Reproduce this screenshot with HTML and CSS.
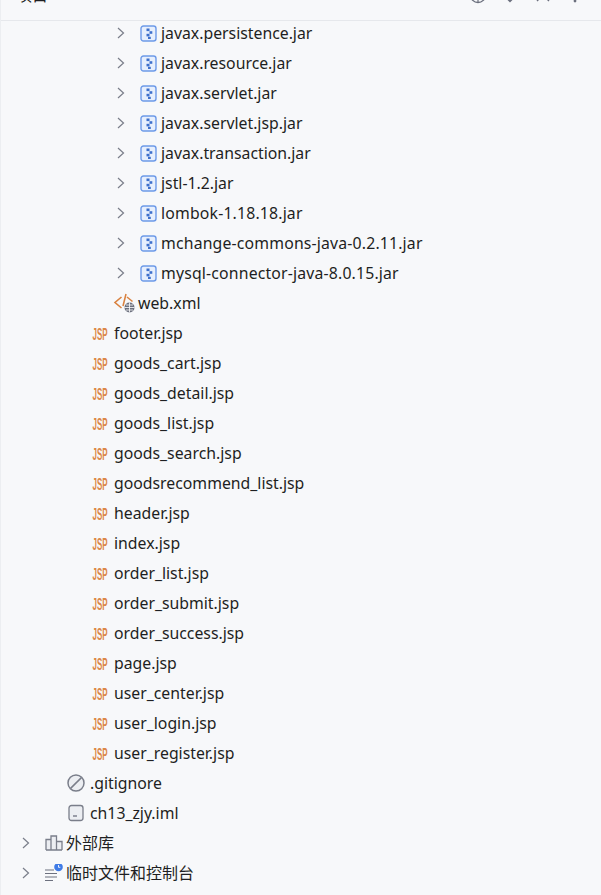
FILE: index.html
```html
<!DOCTYPE html>
<html lang="zh-CN">
<head>
<meta charset="utf-8">
<title>项目</title>
<link rel="stylesheet" href="styles.css">
</head>
<body>
<svg class="defs" width="0" height="0" aria-hidden="true">
  <defs>
    <symbol id="chev" viewBox="0 0 10 14"><path d="M2 2 7.500 7 2 12" fill="none" stroke="#7a7e8a" stroke-width="1.200"/></symbol>
    <symbol id="jar" viewBox="0 0 17 17"><rect x="1" y="1" width="15" height="15" rx="2.500" fill="#e7effd" stroke="#6d9ae8" stroke-width="1.400"/><rect x="6.500" y="3.500" width="3" height="2.600" fill="#3f70cc"/><rect x="9.500" y="6.200" width="2.800" height="2.600" fill="#3f70cc"/><rect x="6.500" y="8.800" width="3" height="2.600" fill="#3f70cc"/><rect x="8" y="11.800" width="2.800" height="2.200" fill="#3f70cc"/></symbol>
    <symbol id="jsp" viewBox="0 0 16 14"><text x="0.500" y="13.500" class="jsp-mark" textLength="15" lengthAdjust="spacingAndGlyphs">JSP</text></symbol>
  </defs>
</svg>
<div class="panel">
  <header class="head">
    <span class="title">项目</span>
    <div class="tools">
      <svg class="tool" viewBox="0 0 18 18"><circle cx="9" cy="9" r="7.500" fill="none" stroke="#6c707e" stroke-width="1.300"/><path d="M9 1.500v15M1.500 9h15" fill="none" stroke="#6c707e" stroke-width="1.200"/></svg>
      <svg class="tool" viewBox="0 0 18 18"><path d="M4 6.500 9 11.500 14 6.500" fill="none" stroke="#6c707e" stroke-width="1.400"/><path d="M5 11.500 9 15.500 13 11.500" fill="none" stroke="#6c707e" stroke-width="1.400"/></svg>
      <svg class="tool" viewBox="0 0 18 18"><path d="M3 3 15 15M15 3 3 15" fill="none" stroke="#6c707e" stroke-width="1.400"/></svg>
      <svg class="tool" viewBox="0 0 18 18"><circle cx="9" cy="3" r="1.400" fill="#6c707e"/><circle cx="9" cy="9" r="1.400" fill="#6c707e"/><circle cx="9" cy="15" r="1.400" fill="#6c707e"/></svg>
    </div>
  </header>
  <ul class="tree">
    <li class="row lv-jar"><svg class="chev"><use href="#chev"/></svg><svg class="ic-jar"><use href="#jar"/></svg><span>javax.persistence.jar</span></li>
    <li class="row lv-jar"><svg class="chev"><use href="#chev"/></svg><svg class="ic-jar"><use href="#jar"/></svg><span>javax.resource.jar</span></li>
    <li class="row lv-jar"><svg class="chev"><use href="#chev"/></svg><svg class="ic-jar"><use href="#jar"/></svg><span>javax.servlet.jar</span></li>
    <li class="row lv-jar"><svg class="chev"><use href="#chev"/></svg><svg class="ic-jar"><use href="#jar"/></svg><span>javax.servlet.jsp.jar</span></li>
    <li class="row lv-jar"><svg class="chev"><use href="#chev"/></svg><svg class="ic-jar"><use href="#jar"/></svg><span>javax.transaction.jar</span></li>
    <li class="row lv-jar"><svg class="chev"><use href="#chev"/></svg><svg class="ic-jar"><use href="#jar"/></svg><span>jstl-1.2.jar</span></li>
    <li class="row lv-jar"><svg class="chev"><use href="#chev"/></svg><svg class="ic-jar"><use href="#jar"/></svg><span class="ver">lombok-1.18.18.jar</span></li>
    <li class="row lv-jar"><svg class="chev"><use href="#chev"/></svg><svg class="ic-jar"><use href="#jar"/></svg><span class="ver">mchange-commons-java-0.2.11.jar</span></li>
    <li class="row lv-jar"><svg class="chev"><use href="#chev"/></svg><svg class="ic-jar"><use href="#jar"/></svg><span class="ver">mysql-connector-java-8.0.15.jar</span></li>
    <li class="row lv-xml"><svg class="ic-xml" viewBox="0 0 22 20"><path d="M8.500 4 2 9.500 8.500 15" fill="none" stroke="#d9813f" stroke-width="1.600"/><path d="M13 1 10 13" fill="none" stroke="#d9813f" stroke-width="1.500"/><path d="M14 4 19.500 8.500" fill="none" stroke="#d9813f" stroke-width="1.500"/><circle cx="16.500" cy="14.500" r="5" fill="#6c707e"/><path d="M11.500 14.500h10M16.500 9.500v10M13 12h7M13 17h7" stroke="#fff" stroke-width=".8" fill="none"/></svg><span>web.xml</span></li>
    <li class="row lv-jsp"><svg class="ic-jsp"><use href="#jsp"/></svg><span>footer.jsp</span></li>
    <li class="row lv-jsp"><svg class="ic-jsp"><use href="#jsp"/></svg><span>goods_cart.jsp</span></li>
    <li class="row lv-jsp"><svg class="ic-jsp"><use href="#jsp"/></svg><span>goods_detail.jsp</span></li>
    <li class="row lv-jsp"><svg class="ic-jsp"><use href="#jsp"/></svg><span>goods_list.jsp</span></li>
    <li class="row lv-jsp"><svg class="ic-jsp"><use href="#jsp"/></svg><span>goods_search.jsp</span></li>
    <li class="row lv-jsp"><svg class="ic-jsp"><use href="#jsp"/></svg><span>goodsrecommend_list.jsp</span></li>
    <li class="row lv-jsp"><svg class="ic-jsp"><use href="#jsp"/></svg><span>header.jsp</span></li>
    <li class="row lv-jsp"><svg class="ic-jsp"><use href="#jsp"/></svg><span>index.jsp</span></li>
    <li class="row lv-jsp"><svg class="ic-jsp"><use href="#jsp"/></svg><span>order_list.jsp</span></li>
    <li class="row lv-jsp"><svg class="ic-jsp"><use href="#jsp"/></svg><span>order_submit.jsp</span></li>
    <li class="row lv-jsp"><svg class="ic-jsp"><use href="#jsp"/></svg><span>order_success.jsp</span></li>
    <li class="row lv-jsp"><svg class="ic-jsp"><use href="#jsp"/></svg><span>page.jsp</span></li>
    <li class="row lv-jsp"><svg class="ic-jsp"><use href="#jsp"/></svg><span>user_center.jsp</span></li>
    <li class="row lv-jsp"><svg class="ic-jsp"><use href="#jsp"/></svg><span>user_login.jsp</span></li>
    <li class="row lv-jsp"><svg class="ic-jsp"><use href="#jsp"/></svg><span>user_register.jsp</span></li>
    <li class="row lv-file"><svg class="ic-file" viewBox="0 0 18 18"><circle cx="9" cy="9" r="8" fill="#eceef2" stroke="#7a7e8a" stroke-width="1.500"/><path d="M3.600 14.400 14.400 3.600" stroke="#7a7e8a" stroke-width="1.500"/></svg><span>.gitignore</span></li>
    <li class="row lv-file"><svg class="ic-file" viewBox="0 0 18 18"><rect x="2" y="1.500" width="14" height="15" rx="2.500" fill="#eceef2" stroke="#7a7e8a" stroke-width="1.300"/><path d="M6 12h4" stroke="#6c707e" stroke-width="1.300"/></svg><span>ch13_zjy.iml</span></li>
    <li class="row lv-root"><svg class="chev"><use href="#chev"/></svg><svg class="ic-root" viewBox="0 0 18 18"><path d="M1 16V5.500h5V16M6 16V2h5.500v14M11.500 16V7.500h5.500V16M1 16h16" fill="#eceef2" stroke="#7a7e8a" stroke-width="1.300"/></svg><span class="cjk">外部库</span></li>
    <li class="row lv-root"><svg class="chev"><use href="#chev"/></svg><svg class="ic-root" viewBox="0 0 18 18"><path d="M0 6h9M0 9.500h12M0 13h12M0 16.500h8" stroke="#6c707e" stroke-width="1.200" fill="none"/><circle cx="13.500" cy="3" r="4.300" fill="#3f7be6"/><path d="M13.500 1v2.300h1.800" stroke="#fff" stroke-width=".9" fill="none"/></svg><span class="cjk">临时文件和控制台</span></li>
  </ul>
</div>
</body>
</html>
```
FILE: styles.css
```css
* {
  box-sizing: border-box;
}
html, body {
  margin: 0;
  height: 100%;
}
body {
  background: #f7f8fa;
  font-family: "Noto Sans", "Noto Sans CJK SC", sans-serif;
  font-size: 15.800px;
  color: #1e1f22;
  overflow: hidden;
}
.defs {
  display: block;
  height: 0;
}
.panel {
  height: 895px;
  overflow: hidden;
  border-left: 1px solid #eceef1;
}
.head {
  position: relative;
  z-index: 1;
  height: 21px;
  padding: 0 17px 0 15px;
  display: flex;
  justify-content: space-between;
  align-items: flex-end;
  background: #f7f8fa;
  border-bottom: 1px solid #e6e8ec;
  overflow: hidden;
}
.title {
  font-size: 16px;
  line-height: 30px;
  margin-bottom: 10px;
  flex: none;
}
.tools {
  display: flex;
  gap: 14.500px;
  margin-bottom: 16px;
  flex: none;
}
.tool {
  width: 18px;
  height: 18px;
}
.tree {
  list-style: none;
  margin: -3px 0 0;
  padding: 0;
}
.row {
  height: 30px;
  display: flex;
  align-items: center;
  white-space: nowrap;
}
.lv-jar { padding-left: 115px; }
.lv-xml { padding-left: 112px; }
.lv-jsp { padding-left: 91px; }
.lv-file { padding-left: 66px; }
.lv-root { padding-left: 20px; }
.chev {
  width: 10px;
  height: 14px;
  flex: none;
}
.lv-jar .chev { margin-right: 14px; }
.lv-root .chev { margin-right: 14px; }
.ic-jar {
  width: 17px;
  height: 17px;
  margin-right: 4px;
  flex: none;
}
.ver {
  letter-spacing: 0.170px;
}
.ic-xml {
  width: 22px;
  height: 20px;
  margin-right: 3px;
  flex: none;
}
.ic-jsp {
  width: 16px;
  height: 14px;
  margin-right: 6px;
  flex: none;
}
.jsp-mark {
  font-family: "Liberation Sans", sans-serif;
  font-size: 17px;
  font-weight: 700;
  fill: #dc8747;
}
.ic-file {
  width: 18px;
  height: 18px;
  margin-right: 5px;
  flex: none;
}
.ic-root {
  width: 18px;
  height: 18px;
  margin-right: 3px;
  flex: none;
}
.cjk {
  font-size: 16px;
  padding-bottom: 2px;
}
```
